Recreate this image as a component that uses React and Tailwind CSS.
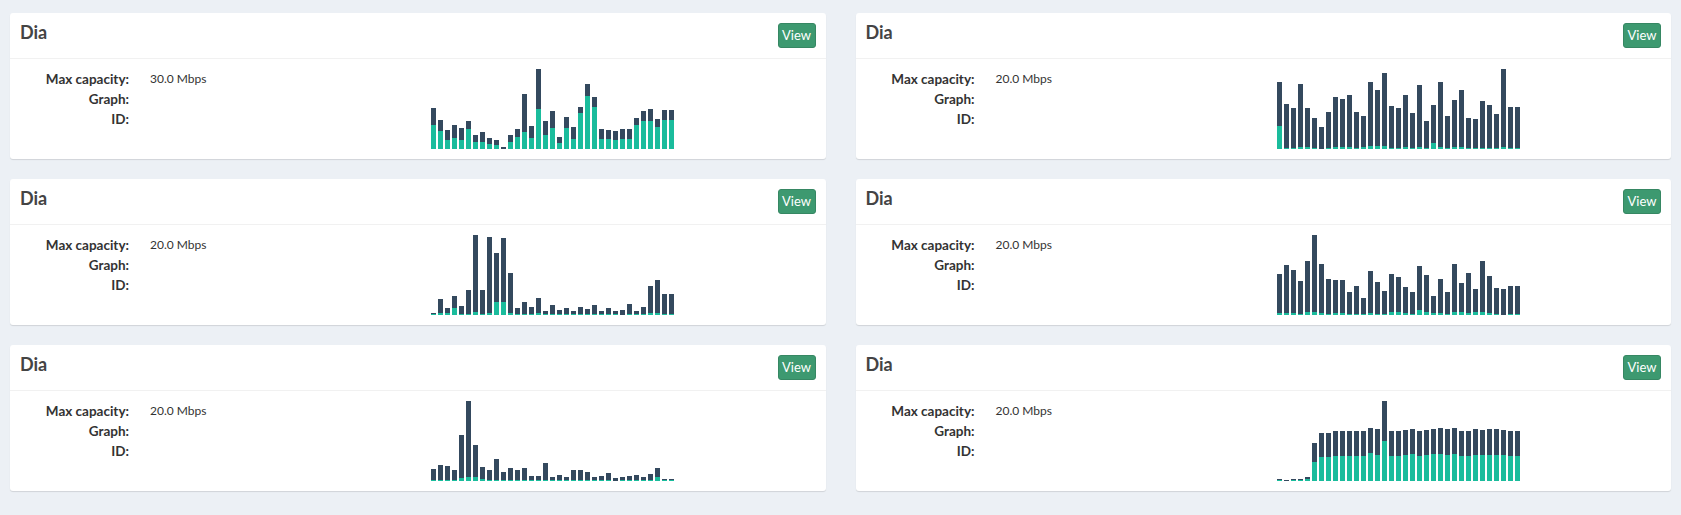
const charts = [
  [[41,24],[29,18],[19,9],[24,11],[21,9],[28,20],[14,7],[17,7],[11,5],[9,4],[2,0],[14,7],[20,12],[55,17],[23,11],[80,40],[28,14],[38,21],[12,6],[32,21],[22,10],[42,36],[65,53],[52,42],[20,10],[19,10],[18,9],[20,10],[20,10],[31,24],[38,28],[40,28],[30,22],[39,29],[39,29]],
  [[67,23],[45,1],[41,1],[65,2],[41,2],[31,1],[22,0],[37,1],[52,2],[50,2],[54,2],[37,1],[33,2],[67,3],[59,3],[76,3],[43,1],[41,1],[54,2],[36,1],[64,2],[28,1],[44,6],[67,2],[33,1],[49,2],[59,2],[31,1],[30,1],[48,1],[44,1],[35,1],[80,2],[42,1],[42,1]],
  [[2,1],[16,2],[7,2],[19,7],[9,1],[25,1],[80,3],[25,1],[78,2],[62,13],[77,13],[42,2],[7,1],[13,1],[8,1],[17,2],[4,1],[10,1],[5,1],[7,1],[4,1],[8,1],[6,1],[10,1],[4,1],[7,1],[4,1],[5,0],[11,1],[4,1],[8,1],[29,2],[35,2],[21,1],[21,1]],
  [[41,2],[50,2],[45,2],[34,1],[54,3],[80,3],[51,2],[36,1],[35,2],[35,2],[23,1],[29,1],[17,1],[44,2],[33,1],[24,1],[41,3],[38,3],[28,2],[23,1],[49,5],[40,3],[19,2],[36,2],[23,1],[51,3],[32,3],[42,2],[26,3],[54,3],[39,2],[27,1],[26,0],[29,1],[29,1]],
  [[12,1],[16,1],[15,1],[11,1],[46,3],[80,4],[36,4],[14,2],[11,1],[22,1],[9,1],[13,1],[11,1],[13,1],[5,1],[5,1],[18,1],[4,1],[6,1],[4,1],[11,1],[11,1],[9,1],[4,1],[5,1],[8,1],[3,0],[4,1],[5,1],[6,1],[4,1],[7,1],[13,4],[2,1],[2,1]],
  [[2,1],[1,0],[2,1],[2,1],[4,2],[38,19],[48,24],[48,24],[50,25],[50,25],[50,25],[50,25],[50,25],[53,28],[52,26],[80,40],[50,25],[50,25],[51,26],[52,27],[50,25],[51,26],[52,27],[53,27],[52,26],[53,27],[50,25],[50,25],[52,26],[51,26],[52,26],[52,26],[51,26],[50,25],[50,25]],
];

const boxes = [
  { title: 'Dia', capacity: '30.0 Mbps', data: charts[0] },
  { title: 'Dia', capacity: '20.0 Mbps', data: charts[1] },
  { title: 'Dia', capacity: '20.0 Mbps', data: charts[2] },
  { title: 'Dia', capacity: '20.0 Mbps', data: charts[3] },
  { title: 'Dia', capacity: '20.0 Mbps', data: charts[4] },
  { title: 'Dia', capacity: '20.0 Mbps', data: charts[5] },
];

function BarChart({ data }) {
  return (
    <div className="flex items-end gap-[2px] h-[80px]">
      {data.map(([total, used], i) => (
        <div key={i} className="w-[5px] flex flex-col justify-end bg-[#34495e]" style={{ height: total }}>
          <div className="bg-[#1abc9c]" style={{ height: used }} />
        </div>
      ))}
    </div>
  );
}

function Box({ title, capacity, data }) {
  return (
    <div className="bg-white rounded-[3px] shadow-[0_1px_1px_rgba(0,0,0,0.12)]">
      <div className="flex items-start justify-between p-[10px] border-b border-[#f1f1f1]">
        <h3 className="text-[18px] leading-[18px] font-bold text-[#444]">{title}</h3>
        <button className="w-[38px] h-[25px] rounded-[3px] bg-[#3d9970] border border-[#368763] text-white text-[13px] leading-none flex items-center justify-center">
          View
        </button>
      </div>
      <div className="flex p-[10px]">
        <div className="w-[411px] shrink-0 leading-[20px] text-[#333]">
          <div className="flex gap-[21px]">
            <div className="w-[109px] text-right font-bold text-[13.5px]">
              <div>Max capacity:</div>
              <div>Graph:</div>
              <div>ID:</div>
            </div>
            <div className="text-[12px]">
              <div>{capacity}</div>
            </div>
          </div>
        </div>
        <BarChart data={data} />
      </div>
    </div>
  );
}

export default function App() {
  return (
    <div className="min-h-[515px] bg-[#ecf0f5] px-[10px] pt-[13px] pb-[24px] font-['Lato',sans-serif]">
      <div className="grid grid-cols-2 gap-x-[30px] gap-y-[20px]">
        {boxes.map((b, i) => (
          <Box key={i} {...b} />
        ))}
      </div>
    </div>
  );
}
